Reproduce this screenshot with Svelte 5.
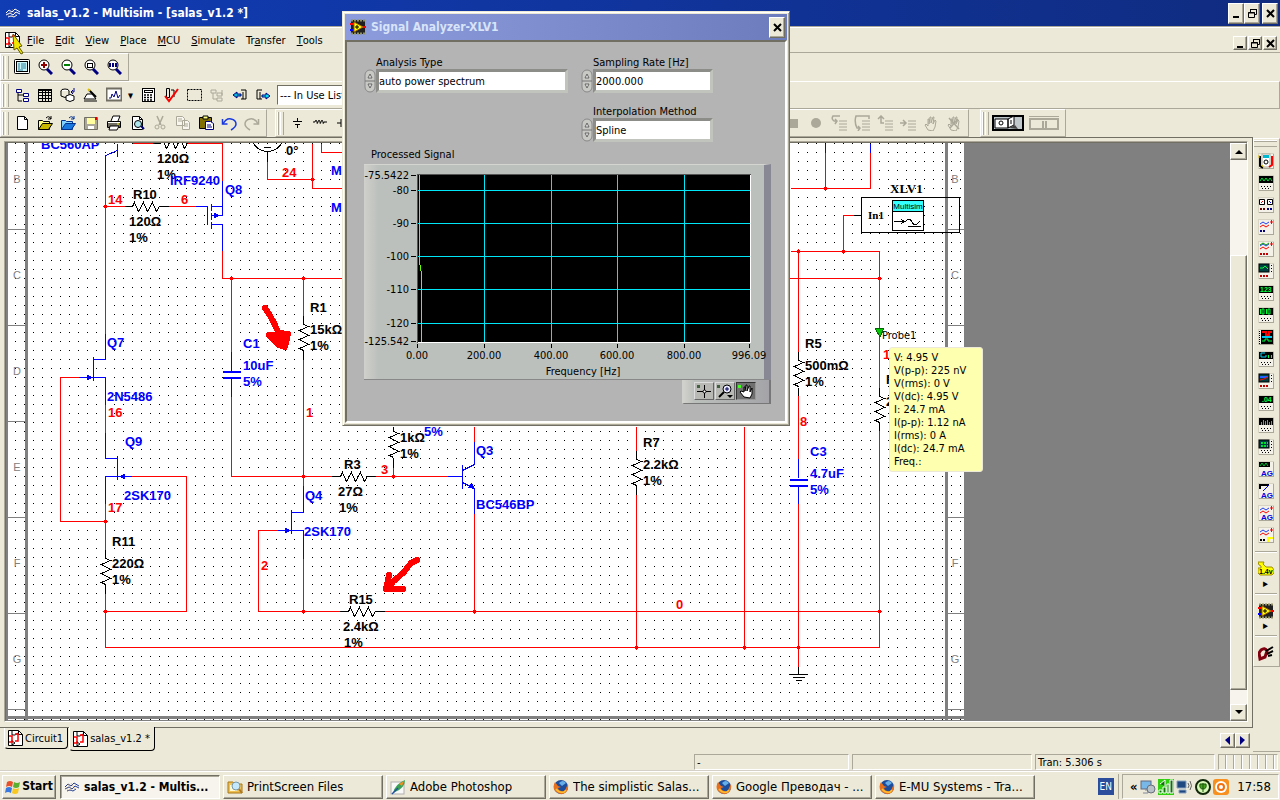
<script lang="ts">
	type Label = [x: number, y: number, text: string];

	const MENUS = ['File', 'Edit', 'View', 'Place', 'MCU', 'Simulate', 'Transfer', 'Tools'],
		// index of the underlined letter, when it isn't the first one
		ACCESS_KEYS: Record<string, number> = { Transfer: 2 };

	const LENS =
		'<circle cx="7" cy="6" r="5" fill="#fff" stroke="#000"/><path d="M10 10l5 5" stroke="#000080" stroke-width="3"/>';
	const PAGE = '<path d="M3.500 1.500h7l3 3v10h-10z" fill="#fff" stroke="#000"/><path d="M10.500 1.500v3h3" fill="none" stroke="#000"/>';
	const LINES = '<path d="M8 6h8M8 9h8M8 12h8M8 15h8" stroke="#aca899"/>';
	const HAND =
		'<path d="M5 15L2 10l1-1 2 2V4h1v5l1-7h1v6l2-6h1l-1 7 2-4 1 1-1 6-2 4z" fill="#ece9d8" stroke="#aca899"/>';
	const GLOBE =
		'<circle cx="8" cy="8" r="7" fill="#1c4c9c"/><path d="M6 4q4-4 7 0l-4 3z" fill="#66aee8"/><path d="M2 3q-3 5 0 9 5 5 10 2 4-3 3-9l-2 4q-1 4-5 3-3-1-3-3l3-1-3-1z" fill="#e8701c"/><path d="M3 10q3 4 8 3l2-2" fill="none" stroke="#ffc030" stroke-width="1.500"/>';

	const ICONS: Record<string, string> = {
		waves:
			'<path d="M1 8l3-3 3 2 3-3 5 3M1 10l4-2 3 2 3-3 4 2M3 12l3-1 3 1 3-2" fill="none" stroke="currentColor"/><path d="M4 5l4 7M7 4l4 6M2 8l3 4" stroke="#c8a060" stroke-width=".5"/>',
		schematic:
			'<path d="M1.500.500h10l4 4v11h-14z" fill="#fff" stroke="#000"/><path d="M11.500.500v4h4M5 1v4h3l3-2M5 10v5l3-2-3-2" fill="none" stroke="#000"/><path d="M2 6h3v6H2M8 4h3v7H8" fill="none" stroke="red" stroke-width="1.500"/>',
		full:
			'<rect x=".500" y=".500" width="15" height="14" rx="1" fill="#fff" stroke="#000"/><rect x="2.500" y="2.500" width="11" height="10" fill="#c8f4f8" stroke="#000"/><path d="M4 5h2m1 0h5M4 7h2m1 0h5M4 9h2m1 0h5M4 11h5" stroke="#006080" stroke-width=".8"/>',
		zoomIn: LENS + '<path d="M4 6h6M7 3v6" stroke="#900000" stroke-width="2"/>',
		zoomOut: LENS + '<path d="M4 6h6" stroke="#008000" stroke-width="2"/>',
		zoomArea: LENS + '<rect x="4.500" y="4.500" width="5" height="4" fill="none" stroke="#000"/>',
		zoomAll: LENS + '<path d="M3 6h2m1 0h2m1 0h2" stroke="#000080" stroke-width="4"/>',
		tree:
			'<path d="M4 5v9h4M4 8h5" fill="none" stroke="#000"/><path d="M2.500 2.500h5v3h-5zM9.500 6.500h5v3h-5zM9.500 11.500h5v3h-5z" fill="#fff" stroke="#000080"/>',
		grid: '<path d="M1.500 2.500h13v12h-13zM5.500 2v12M8.500 2v12M11.500 2v12M2 5.500h12M2 8.500h12M2 11.500h12" fill="none" stroke="#000"/><path d="M1 3h14" stroke="#000" stroke-width="2"/>',
		database:
			'<ellipse cx="5" cy="4" rx="4" ry="2" fill="#fff" stroke="#000"/><path d="M1 4v5q4 3 8 0V4" fill="#ece9d8" stroke="#000"/><path d="M6 9v4q4 3 8 0V9q-4-3-8 0" fill="#fff" stroke="#000"/><path d="M11 5h3V1m-3 4l2-2m-2 2l2 2" fill="none" stroke="#000080"/>',
		wizard:
			'<path d="M4 7h5l4 5H1z" fill="#fff" stroke="#000"/><path d="M6 3l7 7" stroke="#000" stroke-width="2"/><path d="M1 14h13" stroke="#000"/><path d="M5 2l2 2" stroke="#e0c000" stroke-width="2"/>',
		grapher:
			'<rect x=".500" y="1.500" width="15" height="12" fill="#fff" stroke="#716f64" stroke-width="2"/><path d="M3 11h2l1-4 2 3 2-6 2 7 2-3" fill="none" stroke="#000080"/>',
		calc:
			'<rect x="2.500" y="1.500" width="12" height="13" fill="#fff" stroke="#000"/><rect x="4.500" y="3.500" width="8" height="2" fill="#fff" stroke="#000"/><path d="M4 8h9M4 10.500h9M4 13h9" stroke="#000" stroke-width="1.500" stroke-dasharray="2 1"/>',
		erc: '<path d="M3.500 1.500h3v9h-3zM8 3h3v7" fill="none" stroke="#000"/><path d="M2 9l4 5 9-12" fill="none" stroke="red" stroke-width="2"/>',
		marquee: '<rect x="1.500" y="2.500" width="14" height="11" fill="none" stroke="#000" stroke-dasharray="2 1"/>',
		hier: '<path d="M2 3h5v3H2zM8 6h5v3H8zM8 11h5v3H8zM4 6v6h4M13 3v5" fill="none" stroke="#aca899"/>',
		backAnn:
			'<path d="M9 3h5v9H9M11 12V5" fill="none" stroke="#000"/><path d="M1 8l4-3v2h4v2H5v2z" fill="#00b8d8" stroke="#000080"/>',
		fwdAnn:
			'<path d="M7 3H2v9h5M5 12V5" fill="none" stroke="#000"/><path d="M15 9l-4-3v2H7v2h4v2z" fill="#00e0f0" stroke="#000080"/>',
		newFile: PAGE,
		open: '<path d="M1.500 14.500v-9h4l1 1h6v8z" fill="#ffff80" stroke="#000"/><path d="M1.500 14.500l4-6h10l-4 6z" fill="#c8b800" stroke="#000"/><path d="M9 3q3-3 5 1m0-3v3h-3" fill="none" stroke="#000"/>',
		openSample:
			'<path d="M1.500 14.500v-9h4l1 1h6v8z" fill="#80d0ff" stroke="#003090"/><path d="M1.500 14.500l4-6h10l-4 6z" fill="#1878e0" stroke="#003090"/><path d="M9 3q3-3 5 1m0-3v3h-3" fill="none" stroke="#003090"/>',
		save: '<path d="M1.500 2.500h13v12h-13z" fill="#aca899" stroke="#716f64"/><path d="M4 3h8v6H4z" fill="#ffffa0"/><path d="M5 11h6v3H5z" fill="#fff"/><path d="M12 2h2v3h-2z" fill="#e00000"/>',
		print:
			'<path d="M5 6l2-5h7l-2 5M1.500 6.500h13v6h-13z" fill="#fff" stroke="#000"/><path d="M2 8h12v4H2z" fill="#716f64"/><path d="M4 11h9l-2 4H3z" fill="#fff" stroke="#000"/><path d="M11 9h2" stroke="#ff0"/>',
		preview:
			PAGE + '<circle cx="9" cy="9" r="3.500" fill="#b0e8f0" stroke="#000"/><path d="M12 11l3 3" stroke="#000080" stroke-width="2"/>',
		cut: '<path d="M5 1l4 9M11 1L7 10" stroke="#aca899" stroke-width="1.500"/><circle cx="5" cy="12" r="2" fill="none" stroke="#aca899"/><circle cx="11" cy="12" r="2" fill="none" stroke="#aca899"/>',
		copy: '<path d="M1.500 1.500h6l2 2v7h-8zM7.500 5.500h5l2 2v7h-7z" fill="#f8f6ee" stroke="#aca899"/><path d="M3 4h4M3 6h4M9 9h4M9 11h4" stroke="#aca899"/>',
		paste:
			'<path d="M1.500 2.500h12v11h-12z" fill="#807000" stroke="#000"/><path d="M5 1h5v3H5z" fill="#ffff80" stroke="#000"/><path d="M7.500 6.500h5l3 2v6h-8z" fill="#fff" stroke="#000080"/><path d="M9 10h4M9 12h5" stroke="#000080"/>',
		undo: '<path d="M1.500 4v5h5" fill="none" stroke="#1838e0" stroke-width="1.500"/><path d="M2 9q3-6 8-5 5 1 5 5 0 3-5 6" fill="none" stroke="#1838e0" stroke-width="1.500"/>',
		redo: '<path d="M14.500 4v5h-5" fill="none" stroke="#aca899" stroke-width="1.500"/><path d="M14 9q-3-6-8-5-5 1-5 5 0 3 5 6" fill="none" stroke="#aca899" stroke-width="1.500"/>',
		source: '<path d="M8.500 3v3M4 6.500h9M6 9.500h5M8.500 9v4" stroke="#000"/>',
		coil: '<path d="M1 7h2q1-4 2 0 0 3 1 0 1-4 2 0 0 3 1 0 1-4 2 0 0 3 1 0h3" fill="none" stroke="#000"/>',
		diode: '<path d="M2 8h4M6 4v8M9 4v8M9 8h5" stroke="#000"/>',
		stop: '<rect x="4" y="4" width="9" height="9" fill="#aca899"/>',
		record: '<circle cx="8" cy="8" r="5" fill="#aca899"/>',
		stepInto: LINES + '<path d="M9 1H2q-2 3 1 5h3M4 4l2 2-2 3" fill="none" stroke="#aca899" stroke-width="1.500"/>',
		stepOver: LINES + '<path d="M15 4V1H2q-2 6 1 12h3M4 11l2 2-2 3" fill="none" stroke="#aca899" stroke-width="1.500"/>',
		stepOut: LINES + '<path d="M7 8H4V1M1 4l3-3 3 3" fill="none" stroke="#aca899" stroke-width="1.500"/>',
		runTo: LINES + '<path d="M0 8h6M3 5l3 3-3 3" fill="none" stroke="#aca899" stroke-width="1.500"/>',
		hand: HAND,
		handOff: HAND + '<path d="M3 3l10 11M12 4L4 13" stroke="#aca899" stroke-width="1.500"/>',
		flag: '<path d="M2 3q3-2 6 0L7 8Q4 6 1 8z" fill="#e8502c"/><path d="M9 3q3 2 6 0l-1 5q-3 2-6 0z" fill="#5cb030"/><path d="M1 9q3-2 6 0l-1 5q-3-2-6 0z" fill="#3878e0"/><path d="M8 9q3 2 6 0l-1 5q-3 2-6 0z" fill="#f8c820"/>',
		folder:
			'<path d="M1 3h5l2 2h7v9H1z" fill="#f0c050" stroke="#a87818"/><rect x="3" y="6" width="7" height="6" fill="#fff8d0"/><circle cx="9" cy="7" r="4" fill="#c4e8fc" stroke="#7898a8"/><path d="M12 10l3 4" stroke="#b07820" stroke-width="2"/>',
		feather:
			'<rect x="1" y="3" width="13" height="12" fill="#f8f8f8" stroke="#b0b0b0"/><path d="M3 14Q5 5 15 1q0 8-10 12" fill="#38a058"/><path d="M9 5l5-3-2 5z" fill="#f09020"/><path d="M2 15L8 9" stroke="#2050a0" stroke-width="1.500"/>',
		firefox: GLOBE,
		analyzer:
			'<rect x="1" y="1" width="14" height="14" fill="#202020"/><path d="M1 1.500h14M1 14.500h14" stroke="#909060" stroke-dasharray="2 1" stroke-width="2"/><path d="M0 5h4" stroke="red" stroke-width="2"/><path d="M0 11h4" stroke="#00f" stroke-width="2"/><path d="M12 8h4" stroke="red" stroke-width="2"/><path d="M4 3l9 5-9 5z" fill="#ff0" stroke="#a06000"/><path d="M5 8h4M7 6v4" stroke="#000"/>',
		monitor: '<rect x="1" y="2" width="10" height="8" fill="#78b8e8" stroke="#606880"/><path d="M5 11h3v3H3" stroke="#808898" fill="none"/><circle cx="11" cy="10" r="4" fill="#b8c0c8" stroke="#68707c"/>',
		meter: '<rect width="16" height="16" fill="#30d010"/><path d="M1 14h3v-3H1zM5 14h3V8H5zM9 14h2V5H9zM12 14h3V1h-3zM2 5l5-4v6" stroke="#fff" fill="#107008"/>',
		network: '<path d="M1 2h9v7H1zM3 11h7v3H3z" fill="#204880" stroke="#88a0c0"/><path d="M12 4q2 3 0 5M14 2q3 5 0 9" fill="none" stroke="#606060"/>',
		plug: '<circle cx="8" cy="8" r="7" fill="#d8f8b8" stroke="#102808" stroke-width="2"/><path d="M8 4v9M5 5q-1 5 3 5 4 0 3-5z" stroke="#185808" fill="#48a020"/>',
		disc: '<rect width="16" height="16" rx="3" fill="#f89020"/><circle cx="8" cy="8" r="6" fill="#fff"/><circle cx="8" cy="8" r="4" fill="#f07010"/><circle cx="8" cy="8" r="2" fill="#fff"/>'
	};

	const VIEW_TOOLS = ['full', 'zoomIn', 'zoomOut', 'zoomArea', 'zoomAll'],
		MAIN_TOOLS = ['tree', 'grid', 'database', 'wizard'],
		MAIN_TOOLS_2 = ['calc', 'erc', 'marquee', 'hier', 'backAnn', 'fwdAnn'],
		FILE_TOOLS = ['newFile', 'open', 'openSample', 'save', 'print', 'preview', 'cut', 'copy', 'paste', 'undo', 'redo'],
		PART_TOOLS = ['source', 'coil', 'diode'],
		DEBUG_TOOLS = ['stop', 'record', 'stepInto', 'stepOver', 'stepOut', 'runTo', 'hand', 'handOff'];

	const ZIG = '<path d="M2 5l3-2 3 2 3-2" fill="none" stroke="#2040f0"/><path d="M2 8l3-2 3 2 3-2" fill="none" stroke="red"/><path d="M12 3h3M13.500 1v4" stroke="red"/>',
		SCREEN = '<rect x="1" y="1" width="14" height="7" fill="#000"/>',
		SCREEN_SMALL = '<rect x="1" y="1" width="10" height="8" fill="#004040" stroke="#000"/>',
		TERMS = '<path d="M3 11.500h10M4 13.500h8" stroke="#000" stroke-dasharray="1 2"/>',
		RED_TERMS = '<path d="M2 13h9" stroke="#c00000" stroke-width="2" stroke-dasharray="2 1"/>',
		KNOBS = '<path d="M13.500 2v7" stroke="#000" stroke-dasharray="1 2"/>',
		AG = '<text x="3" y="15" class="tag">AG</text>';
	const INSTRUMENTS = [
		'<rect x="4" y="1" width="8" height="13" fill="#fff" stroke="#aca899"/><rect x="5" y="2" width="6" height="3" fill="#00b8d0"/><circle cx="8" cy="9" r="2" fill="#fff" stroke="#000"/><path d="M2 3v10l3 2" stroke="#000" stroke-width="2" fill="none"/><path d="M1 2v3M4 12l2 3" stroke="#e8c000"/><path d="M14 3v9l-3 2" stroke="red" stroke-width="2" fill="none"/>',
		SCREEN + '<path d="M2 6l2-3 2 3 2-3 2 3 2-3 2 3" fill="none" stroke="#00e030"/>' + TERMS,
		'<path d="M1.500 2.500h5v5h-5zM9.500 2.500h5v5h-5z" fill="#fff" stroke="#000"/><path d="M3 6l2-2" stroke="red"/><path d="M11 4l2 2" stroke="#00f"/><path d="M2 12h5" stroke="#600" stroke-width="2" stroke-dasharray="2 1"/><path d="M9 12h5" stroke="#000080" stroke-width="2" stroke-dasharray="2 1"/>',
		ZIG + '<path d="M2 12h6" stroke="#000080" stroke-width="2" stroke-dasharray="2 1"/>',
		ZIG + '<path d="M2 4l3-2 3 2 3-2" fill="none" stroke="#00a000"/>' + RED_TERMS,
		SCREEN_SMALL + '<path d="M2 5h3l2-2 3 3" fill="none" stroke="#00ff40"/>' + KNOBS + RED_TERMS,
		SCREEN + '<text x="2" y="7" class="led">123</text>' + TERMS,
		SCREEN + '<path d="M2.500 2v5M4 2h2v5h-2zM8.500 2v5M10 2h2v5h-2z" stroke="#00ff40" fill="none"/>' + TERMS,
		'<rect x="3" y="1" width="12" height="14" fill="#000"/><path d="M4 3h4v3h3V3h3" fill="none" stroke="red" stroke-width="2"/><path d="M4 8h10" stroke="#00c8f0" stroke-width="2"/><path d="M4 12h3v-2h3v2h4" fill="none" stroke="#00ff40"/><path d="M1.500 2v13" stroke="#000" stroke-dasharray="1 1"/>',
		SCREEN + '<path d="M7 2H3v4h5V4" fill="none" stroke="#00d8ff"/><path d="M10.500 4v3M13.500 4v3" stroke="#00ff40"/>' + TERMS,
		SCREEN_SMALL + '<path d="M2 4h8" stroke="#2060ff" stroke-width="2"/><path d="M2 7l4-1 4-2" stroke="red" fill="none"/>' + KNOBS + RED_TERMS,
		SCREEN + '<text x="4" y="7" class="led">.04</text>' + TERMS,
		SCREEN + '<path d="M3.500 5v3M5.500 3v5M7.500 4v4M9.500 3v5M11.500 5v3M13.500 4v4" stroke="#00e030"/>' + TERMS,
		SCREEN_SMALL + '<path d="M3 4h7M3 7h7" stroke="#00e030" stroke-width="2" stroke-dasharray="2 1"/>' + KNOBS + TERMS,
		'<rect x="1" y="1" width="11" height="5" fill="#000"/><path d="M2 5l2-3 2 3 2-3 2 3" fill="none" stroke="#00c030"/>' + AG,
		'<path d="M2 6V2h9" fill="none" stroke="#000" stroke-width="2"/><path d="M5 8l6-6" stroke="#00f"/>' + AG,
		ZIG + AG,
		ZIG + '<path d="M2 13h5" stroke="#000" stroke-width="2" stroke-dasharray="2 1"/><path d="M9 11h6M10 11v4" stroke="#ff0" stroke-width="2"/>'
	];

	const TASKS = [
			['waves', 'salas_v1.2 - Multis...'],
			['folder', 'PrintScreen Files'],
			['feather', 'Adobe Photoshop'],
			['firefox', 'The simplistic Salas...'],
			['firefox', 'Google Преводач - ...'],
			['firefox', 'E-MU Systems - Tra...']
		],
		TRAY = ['monitor', 'meter', 'network', 'plug', 'disc'];

	const PROBE = [
		'V: 4.95 V',
		'V(p-p): 225 nV',
		'V(rms): 0 V',
		'V(dc): 4.95 V',
		'I: 24.7 mA',
		'I(p-p): 1.12 nA',
		'I(rms): 0 A',
		'I(dc): 24.7 mA',
		'Freq.:'
	];

	// sheet zones, one letter for every 96 units of height
	const ZONES = ['B', 'C', 'D', 'E', 'F', 'G'].map((letter, i) => ({
		letter,
		y: 179 + i * 96,
		// the probe's box lies over these two on the right side
		covered: letter === 'D' || letter === 'E'
	}));

	const RED_WIRES =
			'M105 179V333M132 143H152M186 143H222V180M105 206H124M168 206H195M222 250V278H879M267 161V179H312M312 143V188H342M321 143V152H342' +
			'M231 278V351M231 396V476H331M303 278V315M303 359V485M303 558V611M277 530H258V611H339M78 377H60V521H105M105 404V432M131 476H186V611H105' +
			'M105 503V549M105 593V647H879M393 467V476M375 476H447M474 426V441M474 513V611M636 426V450M636 494V647M744 426V647M384 611H879' +
			'M790 188H870V152M825 152V188M790 251H879V387M843 251V215H853M879 430V647M798 251V351M798 395V458M798 503V666',
		BLUE_WIRES =
			'M105 179V155L117 150M117 143V156M195 206H207V224M211 203V210M211 212V219M211 221V228M211 206H222M211 215H222V180M211 224H222V250' +
			'M231 351V370M231 377V396M105 333V359H93M93 356V380M78 377H105V404M105 432V458H117M117 455V479M131 476H105V503' +
			'M303 485V512H291M291 509V533M277 530H303V558M447 476H462M462 464V488M462 470L474 464V441M462 482L474 488V513M825 143V152M870 143V152' +
			'M798 458V477M798 485V503',
		BLACK_WIRES =
			'M152 143H160M124 206H132M159 206H168M267 151V161M263 147H270M303 315V324M303 350V359M105 549V558M105 584V593M393 426V431M393 458V467' +
			'M331 476H340M366 476H375M339 611H348M375 611H384M636 450V459M636 485V494M853 215H861M879 387V396M879 422V430M798 351V360M798 387V395' +
			'M798 666V674M789 674H807M792 677H804M795 680H801',
		ARROWS = 'M218 215l-4-2v4zM92 377l-5-2v4zM119 476l5-2v4zM290 530l-5-2v4zM474 488l-6-1 3-4z';

	const RESISTORS_H = [[160, 143], [132, 206], [340, 476], [348, 611]],
		RESISTORS_V = [[303, 324], [105, 558], [393, 431], [636, 459], [879, 396], [798, 360]],
		CAPACITORS = [[231, 371], [798, 479]],
		JUNCTIONS = [
			[105, 206], [231, 278], [303, 278], [312, 179], [303, 476], [303, 611], [105, 521], [105, 611], [393, 476],
			[474, 611], [636, 647], [744, 647], [825, 188], [798, 251], [843, 251], [879, 278], [879, 611], [798, 647]
		];

	const BLACK_LABELS: Label[] = [
			[157, 163, '120Ω'], [157, 179, '1%'], [133, 199, 'R10'], [129, 226, '120Ω'], [129, 242, '1%'], [286, 155, '0°'],
			[310, 312, 'R1'], [310, 334, '15kΩ'], [310, 350, '1%'], [112, 546, 'R11'], [112, 568, '220Ω'], [112, 584, '1%'],
			[400, 442, '1kΩ'], [400, 458, '1%'], [344, 469, 'R3'], [338, 496, '27Ω'], [339, 512, '1%'], [643, 447, 'R7'],
			[643, 469, '2.2kΩ'], [643, 485, '1%'], [349, 604, 'R15'], [343, 631, '2.4kΩ'], [344, 647, '1%'],
			[805, 348, 'R5'], [805, 370, '500mΩ'], [805, 386, '1%'], [886, 384, 'R'], [886, 406, '2']
		],
		BLUE_LABELS: Label[] = [
			[41, 149, 'BC560AP'], [170, 185, 'IRF9240'], [225, 194, 'Q8'], [331, 175, 'M'], [331, 212, 'M'], [243, 348, 'C1'],
			[243, 370, '10uF'], [243, 386, '5%'], [107, 347, 'Q7'], [107, 401, '2N5486'], [125, 446, 'Q9'], [124, 500, '2SK170'],
			[305, 500, 'Q4'], [304, 536, '2SK170'], [424, 436, '5%'], [476, 455, 'Q3'], [476, 509, 'BC546BP'],
			[810, 456, 'C3'], [810, 478, '4.7uF'], [810, 494, '5%']
		],
		RED_LABELS: Label[] = [
			[108, 204, '14'], [181, 204, '6'], [282, 177, '24'], [306, 417, '1'], [108, 417, '16'], [108, 512, '17'],
			[261, 570, '2'], [381, 474, '3'], [676, 609, '0'], [883, 359, '1'], [800, 426, '8']
		];

	// graph axes, in the plot's own pixels
	const Y_AXIS = [[11, '-75.5422'], [26, '-80'], [59, '-90'], [92, '-100'], [125, '-110'], [159, '-120'], [177, '-125.542']] as const,
		X_AXIS = [[53, '0.00'], [120, '200.00'], [187, '400.00'], [253, '600.00'], [320, '800.00'], [385, '996.09']] as const;

	let analysisType = $state('auto power spectrum'),
		samplingRate = $state('2000.000'),
		interpolation = $state('Spline');
</script>

{#snippet icon(name: string)}
	<svg class="icon" viewBox="0 0 16 16" aria-hidden="true">{@html ICONS[name]}</svg>
{/snippet}

{#snippet tools(names: string[])}
	{#each names as name}
		<button class="tool" aria-label={name}>{@render icon(name)}</button>
	{/each}
{/snippet}

{#snippet labels(items: Label[], fill: string)}
	{#each items as [x, y, text]}
		<text {x} {y} {fill}>{text}</text>
	{/each}
{/snippet}

{#snippet windowButtons()}
	<button aria-label="Minimize"><svg viewBox="0 0 11 11"><path d="M2 9h6" stroke="#000" stroke-width="2" /></svg></button>
	<button aria-label="Restore">
		<svg viewBox="0 0 11 11"><path d="M3.500 4V1.500h6v5H7M3 1.500h7M1.500 4.500h6v5h-6zM1 5h7" fill="none" stroke="#000" /></svg>
	</button>
	<button aria-label="Close"><svg viewBox="0 0 11 11"><path d="M2 2l7 7M9 2l-7 7" stroke="#000" stroke-width="2" /></svg></button>
{/snippet}

{#snippet spinner()}
	<svg class="spinner" viewBox="0 0 12 24" aria-hidden="true">
		<rect x="1" y="1" width="10" height="22" rx="5" fill="#c8c8c4" stroke="#888" />
		<path d="M1 12h10" stroke="#777" />
		<path d="M4 9l2-4 2 4zM4 15l2 4 2-4z" fill="#eee" stroke="#666" />
	</svg>
{/snippet}

<div class="app">
	<header class="title-bar">
		{@render icon('waves')}
		<h1>salas_v1.2 - Multisim - [salas_v1.2 *]</h1>
		<div class="window-buttons">{@render windowButtons()}</div>
	</header>

	<nav class="menu-bar">
		{@render icon('schematic')}
		{#each MENUS as menu}
			{@const key = ACCESS_KEYS[menu] ?? 0}
			<button>{menu.slice(0, key)}<u>{menu[key]}</u>{menu.slice(key + 1)}</button>
		{/each}
		<div class="window-buttons small">{@render windowButtons()}</div>
	</nav>

	<div class="tool-row">
		<div class="toolbar"><i class="grip"></i>{@render tools(VIEW_TOOLS)}</div>
	</div>
	<div class="tool-row">
		<div class="toolbar wide">
			<i class="grip"></i>
			{@render tools(MAIN_TOOLS)}
			<button class="tool" aria-label="Grapher">{@render icon('grapher')}</button>
			<button class="drop" aria-label="Analyses">▾</button>
			{@render tools(MAIN_TOOLS_2)}
			<select class="in-use" aria-label="In use list"><option>--- In Use List ---</option></select>
		</div>
	</div>
	<div class="tool-row">
		<div class="toolbar file"><i class="grip"></i>{@render tools(FILE_TOOLS)}</div>
		<div class="toolbar parts">
			<i class="grip"></i>
			{@render tools(PART_TOOLS)}
			<span class="spring"></span>
			{@render tools(DEBUG_TOOLS)}
		</div>
		<div class="toolbar run">
			<i class="grip"></i>
			<button class="switch" aria-label="Run simulation">
				<svg viewBox="0 0 32 16">
					<rect x="1" y="1" width="30" height="14" fill="#c0c8cc" stroke="#000" stroke-width="2" />
					<path d="M3 4h13v9H3zM16 4l6-3v9l-6 3z" fill="#fff" stroke="#000" />
					<circle cx="9" cy="8" r="2" fill="none" stroke="#000" />
					<path d="M19 5v4" stroke="#000" />
					<path d="M17 13l6-3 3 4z" fill="#444" />
				</svg>
			</button>
			<button class="switch" aria-label="Pause simulation">
				<svg viewBox="0 0 32 16">
					<path d="M1 1.500h30" stroke="#aca899" />
					<rect x="2" y="4" width="28" height="10" fill="none" stroke="#aca899" stroke-width="2" />
					<path d="M15 6v7M18 6v7" stroke="#aca899" stroke-width="2" />
				</svg>
			</button>
		</div>
	</div>

	<main>
		<section class="documents">
			<div class="frame">
				<div class="view">
					<svg class="sheet" shape-rendering="crispEdges">
						<defs>
							<pattern id="dots" x="6" y="8" width="9" height="9" patternUnits="userSpaceOnUse">
								<rect width="1" height="1" fill="#000" />
							</pattern>
						</defs>
						<g transform="translate(-6 -143)">
							<rect x="6" y="143" width="958" height="577" fill="#fff" />
							<rect x="8" y="143" width="956" height="577" fill="url(#dots)" />
							<path d="M6 143h2v577h-2zM25 143h3v577h-3zM945 143h3v577h-3zM6 716h958v3H6z" fill="#808080" />
							<g class="zones">
								{#each ZONES as { letter, y, covered }}
									<path d="M8 {y + 50}h17M948 {y + 50}h16" transform="translate(0 .5)" stroke="#808080" />
									<text x="17" y={y + 4}>{letter}</text>
									{#if !covered}
										<text x="955" y={y + 4}>{letter}</text>
									{/if}
								{/each}
							</g>

							<g class="wires" transform="translate(.5 .5)">
								<path d={RED_WIRES} stroke="red" />
								<path d={BLUE_WIRES} stroke="#00f" />
								<path d={BLACK_WIRES} stroke="#000" />
								<path d={ARROWS} fill="#00f" stroke="#00f" />
								{#each RESISTORS_H as [x, y]}
									<path d="M{x} {y}l2-4 4 9 5-9 4 9 5-9 4 9 3-5" stroke="#000" />
								{/each}
								{#each RESISTORS_V as [x, y]}
									<path d="M{x} {y}l5 2-9 4 9 5-9 4 9 5-9 4 4 2" stroke="#000" />
								{/each}
								{#each CAPACITORS as [x, y]}
									<path d="M{x - 9} {y}h18M{x - 9} {y + 6}h18" stroke="#00f" stroke-width="2" />
								{/each}
								<circle cx="267" cy="135" r="16" stroke="#000" />
							</g>
							{#each JUNCTIONS as [x, y]}
								<path d="M{x - 1} {y - 1}h3v3h-3zM{x} {y - 2}h1v5h-1zM{x - 2} {y}h5v1h-5z" fill="red" />
							{/each}

							<g class="labels">
								{@render labels(BLACK_LABELS, '#000')}
								{@render labels(BLUE_LABELS, '#00f')}
								{@render labels(RED_LABELS, 'red')}
							</g>

							<rect x="861.500" y="197.500" width="98" height="35" fill="none" stroke="#000" />
							<rect x="892.500" y="200.500" width="31" height="30" fill="#fff" stroke="#000" />
							<rect x="893" y="201" width="30" height="10" fill="#3ff" />
							<path d="M892 211.500h32M894 221.500h10M901 219.500l4 2-4 2M905 222q4-6 7 0t8-1M908 226h13" fill="none" stroke="#000" />
							<text class="serif" x="890" y="193">XLV1</text>
							<text class="serif pin" x="868" y="219">In1</text>
							<text class="badge" x="908" y="209">Multisim</text>

							<path d="M875 328h9l-4 9z" fill="#0c0" stroke="#060" />
							<text class="probe-name" x="882" y="339">Probe1</text>

							<g class="marker">
								<path d="M265 308q10 14 16 32" />
								<path d="M269 335h8l2-2 9 1-3 13-6-2z" fill="red" />
								<path d="M417 560l-6 3-7 9-16 14M389 575l-3 14h17M392 583l-5 6" />
							</g>
						</g>
					</svg>
					<div class="probe">
						{#each PROBE as line}
							<p>{line}</p>
						{/each}
					</div>
					<div class="scrollbar">
						<button aria-label="Scroll up"><svg viewBox="0 0 9 5"><path d="M1 5l4-4 4 4z" /></svg></button>
						<span class="thumb"></span>
						<button aria-label="Scroll down"><svg viewBox="0 0 9 5"><path d="M1 0l4 4 4-4z" /></svg></button>
					</div>
				</div>
			</div>
			<div class="tabs">
				<button class="tab">{@render icon('schematic')}Circuit1</button>
				<button class="tab active">{@render icon('schematic')}salas_v1.2 *</button>
				<div class="tab-scroll">
					<button aria-label="Previous tab"><svg viewBox="0 0 5 9"><path d="M5 0v9L0 4z" /></svg></button>
					<button aria-label="Next tab"><svg viewBox="0 0 5 9"><path d="M0 0v9l5-5z" /></svg></button>
				</div>
			</div>
		</section>

		<aside>
			<div class="instruments">
				<i class="grip across"></i>
				{#each INSTRUMENTS as art, i}
					<button aria-label="Instrument {i + 1}">
						<svg class="icon" viewBox="0 0 16 16">
							<rect x=".500" y=".500" width="15" height="15" fill="#f4f2e8" stroke="#d8d4c4" />
							<path d="M1 15.500h15M15.500 1v15" stroke="#aca899" />
							{@html art}
						</svg>
					</button>
				{/each}
				<hr />
				<button aria-label="Measurement probe">
					<svg class="icon" viewBox="0 0 16 16">
						<path d="M0 1h6L5 3l3 3h6l2 3v3l-2 2H2l-2-2V7h3V5L1 4z" fill="#ff0" stroke="#a09000" />
						<text class="tag dark" x="1" y="13">1.4v</text>
					</svg>
				</button>
				<button class="more" aria-label="More probes">▸</button>
				<hr />
				<button aria-label="LabVIEW instruments">{@render icon('analyzer')}</button>
				<button class="more" aria-label="More LabVIEW instruments">▸</button>
				<hr />
				<button aria-label="Current probe">
					<svg class="icon" viewBox="0 0 16 16">
						<path d="M3 5q4-3 6 1l-2 6-5 2-1-6z" fill="none" stroke="#800010" stroke-width="3" />
						<path d="M8 6l7-4M9 9l6-3M10 11l4-1" stroke="#000" stroke-width="2" />
					</svg>
				</button>
			</div>
		</aside>
	</main>

	<footer class="status">
		<span class="pane">-</span>
		<span class="pane"></span>
		<span class="pane">Tran: 5.306 s</span>
		<span class="progress"></span>
	</footer>

	<footer class="taskbar">
		<button class="start">{@render icon('flag')}Start</button>
		{#each TASKS as [name, title], i}
			<button class="task" class:active={i === 0}>{@render icon(name)}<span>{title}</span></button>
		{/each}
		<span class="lang">EN</span>
		<div class="tray">
			<span class="chevron">«</span>
			{#each TRAY as name}
				{@render icon(name)}
			{/each}
			<time>17:58</time>
		</div>
	</footer>

	<div class="dialog" role="dialog" aria-label="Signal Analyzer-XLV1">
		<header>
			{@render icon('analyzer')}
			<h2>Signal Analyzer-XLV1</h2>
			<button aria-label="Close"><svg viewBox="0 0 11 11"><path d="M2 2l7 7M9 2l-7 7" stroke="#000" stroke-width="2" /></svg></button>
		</header>
		<div class="panel">
			<div class="fields">
				<div class="field type">
					<label for="analysis">Analysis Type</label>
					<div>{@render spinner()}<input id="analysis" bind:value={analysisType} /></div>
				</div>
				<div class="stack">
					<div class="field">
						<label for="rate">Sampling Rate [Hz]</label>
						<div>{@render spinner()}<input id="rate" bind:value={samplingRate} /></div>
					</div>
					<div class="field">
						<label for="interp">Interpolation Method</label>
						<div>{@render spinner()}<input id="interp" bind:value={interpolation} /></div>
					</div>
				</div>
			</div>
			<h3>Processed Signal</h3>
			<div class="graph">
				<svg viewBox="0 0 407 214" shape-rendering="crispEdges">
					<rect x="53" y="9" width="334" height="169" fill="#555" />
					<rect x="54" y="10" width="333" height="168" fill="#fff" />
					<rect x="54" y="10" width="332" height="167" fill="#000" />
					<g stroke="#00e8f8">
						{#each Y_AXIS.slice(1, -1) as [y]}
							<path d="M54 {y - 1}.5h332" />
						{/each}
						{#each X_AXIS.slice(1, -1) as [x]}
							<path d="M{x}.5 10v167" />
						{/each}
					</g>
					<path d="M55.500 10v90M56.500 100v6M57.500 106v71" stroke="#6f0" />
					{#each Y_AXIS as [y, text]}
						<path d="M47 {y - 1}.5h5" stroke="#000" />
						<text x="45" y={y + 3} text-anchor="end">{text}</text>
					{/each}
					{#each X_AXIS as [x, text]}
						<path d="M{x}.5 179v4" stroke="#000" />
						<text {x} y="194" text-anchor="middle">{text}</text>
					{/each}
					<text x="219" y="210" text-anchor="middle">Frequency [Hz]</text>
				</svg>
			</div>
			<div class="palette">
				<button aria-label="Cursor">
					<svg viewBox="0 0 18 16">
						<path d="M2 2h3v3H2z" fill="#406040" />
						<path d="M2 8.500h14M9.500 2v13" stroke="#000" />
						<circle cx="9.500" cy="8.500" r="1.500" fill="#fff" stroke="#000" />
					</svg>
				</button>
				<button aria-label="Zoom">
					<svg viewBox="0 0 18 16">
						<path d="M1 2h3v3H1z" fill="#406040" />
						<path d="M3 14l5-5" stroke="#000" stroke-width="2" />
						<circle cx="11" cy="6" r="4" fill="#e8e8ff" stroke="#000" />
						<path d="M9 6h4M11 4v4" stroke="#005" />
						<path d="M11 12h6l-3 3z" />
					</svg>
				</button>
				<button class="pressed" aria-label="Pan">
					<svg viewBox="0 0 18 16">
						<path d="M1 2h3v3H1z" fill="#4f2" />
						<path d="M7 14L3 9l1-1 3 1V4h1v4l1-6h1v6l2-5h1v6l2-4v6l-2 4z" fill="#fff" stroke="#000" />
					</svg>
				</button>
			</div>
		</div>
	</div>

	<svg class="pointer" viewBox="0 0 14 22" aria-hidden="true">
		<path d="M1 1l9 12-3 1 4 6-2 1-4-6-3 2z" fill="#f0e800" stroke="#605800" />
	</svg>
</div>

<style>
	:global(body) {
		margin: 0;
		background: #ece9d8;
	}
	.app {
		position: relative;
		display: flex;
		flex-direction: column;
		min-height: 100vh;
		overflow: hidden;
		background: #ece9d8;
		color: #000;
		font: 11px/13px 'DejaVu Sans Condensed', 'DejaVu Sans', sans-serif;
	}
	.app *,
	.app {
		box-sizing: border-box;
	}
	button {
		display: flex;
		align-items: center;
		justify-content: center;
		margin: 0;
		padding: 0;
		border: 0;
		background: none;
		color: inherit;
		font: inherit;
		white-space: nowrap;
	}
	h1,
	h2,
	h3,
	p {
		margin: 0;
		font: inherit;
	}
	.icon {
		flex: none;
		width: 16px;
		height: 16px;
	}

	.title-bar {
		display: flex;
		align-items: center;
		gap: 6px;
		height: 27px;
		padding: 0 2px 0 5px;
		border-bottom: 1px solid #aca899;
		background: linear-gradient(90deg, #103cb4, #10349c 50%, #102c80);
		color: #fff;
	}
	.title-bar h1 {
		font-size: 12px;
		font-weight: bold;
	}
	.window-buttons {
		display: flex;
		margin-left: auto;
	}
	.window-buttons button,
	.dialog header button {
		width: 16px;
		height: 21px;
		border: 1px solid;
		border-color: #fff #716f64 #716f64 #fff;
		background: #ece9d8;
		box-shadow: inset -1px -1px #aca899;
	}
	.window-buttons button:last-child {
		margin-left: 2px;
	}
	.window-buttons svg,
	.dialog header button svg {
		width: 11px;
		height: 11px;
	}
	.window-buttons.small {
		gap: 1px;
		align-self: flex-end;
	}
	.window-buttons.small button {
		width: 14px;
		height: 14px;
		margin: 0;
	}

	.menu-bar {
		display: flex;
		align-items: center;
		gap: 11px;
		height: 26px;
		padding: 2px 3px 2px 4px;
		border-top: 1px solid #fff;
		border-bottom: 1px solid #aca899;
	}
	.menu-bar > .icon {
		margin-right: -4px;
	}

	.tool-row {
		display: flex;
		height: 28px;
	}
	.toolbar {
		display: flex;
		align-items: center;
		border: 1px solid;
		border-color: #fff #aca899 #aca899 #fff;
		padding-right: 3px;
	}
	.toolbar.wide {
		flex: 1;
	}
	.toolbar.file {
		margin-right: 8px;
	}
	.toolbar.parts {
		width: 694px;
		margin-right: 11px;
	}
	.spring {
		flex: 1;
	}
	.grip {
		width: 6px;
		height: 23px;
		margin: 0 1px 0 2px;
		border: solid #aca899;
		border-width: 0 1px;
		box-shadow: -1px 0 #fff, inset -2px 0 #ece9d8, inset -3px 0 #fff;
	}
	.tool {
		width: 23px;
		height: 22px;
	}
	.drop {
		width: 11px;
	}
	.in-use {
		width: 140px;
		height: 20px;
		margin-left: 3px;
		padding: 0 2px;
		border: 1px solid;
		border-color: #716f64 #fff #fff #716f64;
		border-radius: 0;
		appearance: none;
		background: #fff;
		color: inherit;
		font: inherit;
	}
	.switch {
		width: 36px;
	}
	.switch svg {
		width: 32px;
		height: 16px;
	}

	main {
		display: flex;
		flex: 1;
	}
	.documents {
		display: flex;
		flex: 1;
		flex-direction: column;
		min-width: 0;
	}
	.frame {
		display: flex;
		flex: 1;
		padding: 3px 4px 5px;
		border: solid #716f64;
		border-width: 1px 1px 1px 0;
	}
	.view {
		position: relative;
		display: flex;
		flex: 1;
		border: 1px solid;
		border-color: #aca899 #fff #fff #aca899;
		box-shadow: inset 1px 1px #716f64;
		padding: 1px 0 0 1px;
		min-width: 0;
	}
	.sheet {
		flex: 1;
		min-width: 0;
		height: 100%;
		min-height: 577px;
		background: #808080;
	}
	.wires {
		fill: none;
	}
	.labels {
		font: bold 13px 'Liberation Sans', Arial, sans-serif;
	}
	.zones {
		fill: #808080;
		font: 11px 'Liberation Sans', Arial, sans-serif;
		text-anchor: middle;
	}
	.serif {
		font: bold 13px 'Liberation Serif', serif;
	}
	.pin {
		font-size: 11px;
	}
	.badge {
		font: 8px 'Liberation Sans', Arial, sans-serif;
		text-anchor: middle;
	}
	.probe-name {
		font-size: 11px;
	}
	.marker {
		fill: none;
		stroke: red;
		stroke-width: 6;
		stroke-linecap: round;
		stroke-linejoin: round;
	}
	.probe {
		position: absolute;
		left: 884px;
		top: 205px;
		width: 94px;
		padding: 3px 4px;
		border: 1px solid #ece9d8;
		border-radius: 3px;
		background: #ffffb0;
	}
	.scrollbar {
		display: flex;
		flex-direction: column;
		width: 17px;
		background: #f6f4ec;
	}
	.scrollbar button,
	.thumb,
	.tab-scroll button {
		border: 1px solid;
		border-color: #fff #716f64 #716f64 #fff;
		background: #ece9d8;
		box-shadow: inset -1px -1px #aca899;
	}
	.scrollbar button {
		height: 17px;
	}
	.scrollbar svg {
		width: 9px;
		height: 5px;
	}
	.thumb {
		flex: 1;
		margin: 95px 0 14px;
	}

	.tabs {
		display: flex;
		align-items: flex-start;
		height: 24px;
		padding: 0 3px 0 4px;
	}
	.tab {
		gap: 2px;
		height: 21px;
		padding: 0 4px 0 2px;
		border: 1px solid #000;
		border-top: 0;
		border-left-color: #fff;
		border-radius: 0 0 4px 4px;
		background: #ece9d8;
	}
	.tab.active {
		height: 24px;
		margin: -1px 0 0 1px;
	}
	.tab-scroll {
		display: flex;
		margin: 5px 0 0 auto;
	}
	.tab-scroll button {
		width: 15px;
		height: 15px;
	}
	.tab-scroll svg {
		width: 5px;
		height: 9px;
		fill: #000080;
	}

	aside {
		width: 27px;
		border-bottom: 1px solid #aca899;
	}
	.instruments {
		display: flex;
		flex-direction: column;
		align-items: center;
		margin-top: 1px;
		padding: 2px 2px 2px 0;
		border: 1px solid;
		border-color: #fff #aca899 #aca899 #fff;
	}
	.instruments button {
		width: 22px;
		height: 22px;
	}
	.instruments .more {
		height: 8px;
		line-height: 8px;
	}
	.instruments hr {
		width: 22px;
		height: 2px;
		margin: 5px 0;
		border: solid;
		border-width: 1px 0;
		border-color: #aca899 #fff #fff;
	}
	.grip.across {
		width: 23px;
		height: 6px;
		margin: 0 0 3px;
		border-width: 1px 0;
		box-shadow: 0 -1px #fff;
	}
	.instruments :global(.tag) {
		fill: #0000e0;
		font: bold 8px 'Liberation Sans', Arial, sans-serif;
	}
	.instruments .dark {
		fill: #000;
		font-size: 7px;
	}
	.instruments :global(.led) {
		fill: #0f4;
		font: bold 7px 'Liberation Sans', Arial, sans-serif;
	}

	.status {
		display: flex;
		justify-content: flex-end;
		gap: 3px;
		height: 19px;
		padding: 2px 2px 1px 0;
	}
	.pane {
		width: 180px;
		padding: 1px 2px;
		border: 1px solid;
		border-color: #aca899 #fff #fff #aca899;
	}
	.pane:first-child {
		width: 155px;
	}
	.progress {
		width: 60px;
		border: 1px solid;
		border-color: #aca899 #fff #fff #aca899;
		background: repeating-linear-gradient(90deg, #ece9d8 0 6px, #aca899 6px 7px, #fff 7px 8px);
	}

	.taskbar {
		display: flex;
		align-items: center;
		gap: 3px;
		height: 29px;
		padding: 1px 1px 0 2px;
		border-top: 1px solid #fff;
		box-shadow: 0 -1px #d4d0c8;
		font-size: 13px;
	}
	.start,
	.task {
		height: 24px;
		border: 1px solid;
		border-color: #fff #716f64 #716f64 #fff;
		box-shadow: inset -1px -1px #aca899;
	}
	.start {
		gap: 1px;
		width: 54px;
		margin-right: 1px;
		font-size: 12px;
		font-weight: bold;
	}
	.task {
		justify-content: flex-start;
		gap: 4px;
		width: 160px;
		min-width: 0;
		padding: 0 3px;
	}
	.task span {
		overflow: hidden;
		line-height: 18px;
	}
	.task.active {
		border-color: #716f64 #fff #fff #716f64;
		box-shadow: inset 1px 1px #aca899;
		background: #f6f4ec;
		font-size: 12px;
		font-weight: bold;
	}
	.task.active .icon {
		color: #203c98;
	}
	.lang {
		margin-left: auto;
		padding: 2px;
		background: #2c4c9c;
		color: #fff;
		font-size: 10px;
	}
	.tray {
		display: flex;
		align-items: center;
		justify-content: space-between;
		width: 157px;
		height: 25px;
		margin-left: 5px;
		padding: 0 7px;
		border: 1px solid;
		border-color: #aca899 #fff #fff #aca899;
		box-shadow: -3px 0 #ece9d8, -4px 0 #aca899;
	}
	.chevron {
		font-weight: bold;
	}
	.tray time {
		margin-left: 6px;
	}

	.dialog {
		position: absolute;
		left: 342px;
		top: 11px;
		width: 448px;
		padding: 2px;
		border: 1px solid;
		border-color: #ece9d8 #716f64 #716f64 #ece9d8;
		background: #ece9d8;
		box-shadow: inset 1px 1px #fff, inset -1px -1px #aca899;
	}
	.dialog header {
		display: flex;
		align-items: center;
		gap: 5px;
		height: 26px;
		padding: 0 2px 0 5px;
		background: linear-gradient(90deg, #8c9cdc, #6c7cbc);
	}
	.dialog h2 {
		color: #d8e4f8;
		font-size: 12px;
		font-weight: bold;
	}
	.dialog header button {
		margin-left: auto;
	}
	.panel {
		display: flex;
		flex-direction: column;
		padding: 14px 14px 17px 17px;
		border: 2px solid;
		border-color: #716f64 #fff #fff #716f64;
		background: #b4b4b4;
	}
	.fields {
		display: flex;
		align-items: flex-start;
		gap: 13px;
	}
	.field label {
		display: block;
		margin-left: 12px;
	}
	.field div {
		display: flex;
		align-items: center;
	}
	.spinner {
		width: 12px;
		height: 24px;
	}
	.field input {
		width: 120px;
		height: 24px;
		padding: 0;
		border: 3px solid;
		border-color: #8c8c88 #c0c4bc #c0c4bc #8c8c88;
		border-radius: 0;
		background: #fff;
		color: inherit;
		font: inherit;
	}
	.field.type input {
		width: 192px;
	}
	.stack {
		display: flex;
		flex-direction: column;
		gap: 12px;
	}
	.panel h3 {
		margin: 6px 0 3px 7px;
	}
	.graph {
		border: solid;
		border-width: 1px 7px 1px 0;
		border-color: #d4d4d0 #888894 #888 #d4d4d0;
		background: linear-gradient(90deg, #d0d0cc, #bcc0bc 14px);
	}
	.graph svg {
		display: block;
		width: 407px;
		height: 214px;
		margin-right: -7px;
	}
	.palette {
		display: flex;
		align-self: flex-end;
		gap: 1px;
		padding: 2px 13px 3px 10px;
		border: solid;
		border-width: 0 2px 1px;
		border-color: #d0d0cc #777 #777 #d0d0cc;
		background: linear-gradient(90deg, #d0d0cc, #bcc0bc 10px, #a4a4a8);
	}
	.palette button {
		width: 20px;
		height: 18px;
		border: 1px solid;
		border-color: #ddd #666 #666 #ddd;
		background: #b8b8b4;
	}
	.palette .pressed {
		border-color: #333 #999 #999 #333;
		background: #707070;
	}
	.palette svg {
		width: 18px;
		height: 16px;
	}

	.pointer {
		position: absolute;
		left: 12px;
		top: 33px;
		width: 14px;
		height: 22px;
	}
</style>
